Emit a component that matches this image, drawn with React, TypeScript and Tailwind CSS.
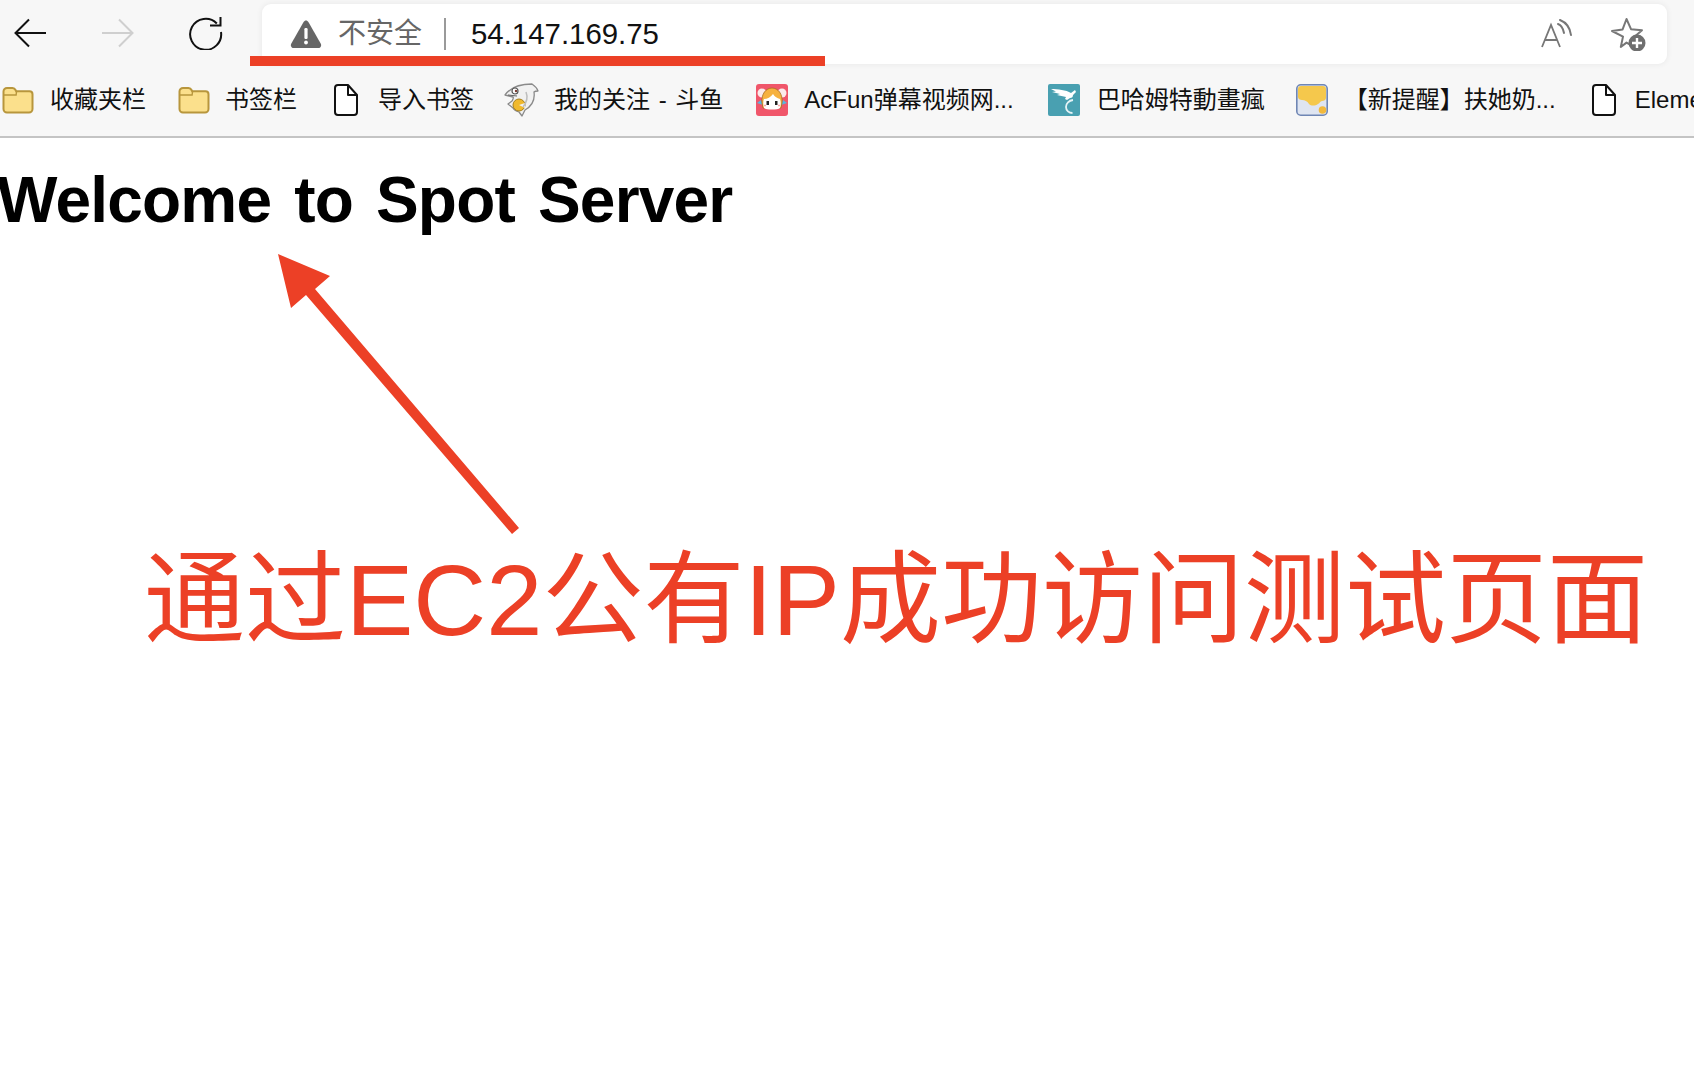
const sans = "font-['Liberation_Sans','Noto_Sans_CJK_SC',sans-serif]";

function FolderIcon() {
    return <svg width="32" height="28" viewBox="0 0 32 28" className="shrink-0">
        <path d="M1.500 5.500a3.500 3.500 0 0 1 3.500-3.500h5.500c1.500 0 2.500.8 3.200 2.200l.5 1h13.300a3 3 0 0 1 3 3V23a3.500 3.500 0 0 1-3.500 3.500H5A3.500 3.500 0 0 1 1.500 23z" fill="#fbe08c" stroke="#b8963c" strokeWidth="2" />
        <path d="M1.500 9h12.600l.5-3.800" fill="none" stroke="#b8963c" strokeWidth="1.400" />
    </svg>;
}

function DocIcon() {
    return <svg width="24" height="32" viewBox="0 0 24 32" className="shrink-0">
        <path d="M4 1h10l9 10v17a3 3 0 0 1-3 3H4a3 3 0 0 1-3-3V4a3 3 0 0 1 3-3z" fill="#fff" stroke="#111" strokeWidth="2" strokeLinejoin="round" />
        <path d="M14 1v10h9" fill="none" stroke="#111" strokeWidth="2" strokeLinejoin="round" />
    </svg>;
}

function SharkIcon() {
    return <svg width="35" height="34" viewBox="0 0 35 34" className="shrink-0">
        <path d="M1 12C6 5 14 1 28 1c3 2 5 4 6 7-2 0-3 0-4 1 1 7-2 14-9 18l-3 6-3-4c-3-1-5-2-6-4L4 21l4-3c1-2 2-3 1-4z" fill="#f1f1f1" stroke="#8a8a8a" strokeWidth="1.300" strokeLinejoin="round" />
        <circle cx="11" cy="8" r="3" fill="#fff" stroke="#555" strokeWidth="1.200" />
        <circle cx="12" cy="8" r="1.200" fill="#7a3b32" />
        <path d="M4 12l9 1" stroke="#666" strokeWidth="1.200" />
        <circle cx="15" cy="22" r="6" fill="#f0b92d" stroke="#a57f1c" />
        <path d="M15 22l6-2v5z" fill="#f1f1f1" />
        <path d="M22 9c2 5 1 10-3 15" fill="none" stroke="#bdbdbd" strokeWidth="1.500" />
    </svg>;
}

function AcfunIcon() {
    return <svg width="32" height="32" viewBox="0 0 32 32" className="shrink-0">
        <rect width="32" height="32" rx="3" fill="#f0566a" />
        <circle cx="6" cy="9" r="4.500" fill="#fbeaea" />
        <circle cx="26" cy="9" r="4.500" fill="#fbeaea" />
        <path d="M1 19l4-3 2 5zM31 19l-4-3-2 5z" fill="#57b6e0" />
        <path d="M6 19C5 10 10 4 16 4s11 6 10 15l-1 5H7z" fill="#f6b13f" stroke="#a76a24" strokeWidth=".8" />
        <path d="M8 24c-1-3-1-7 0-9 3 0 7-2 9-5 2 3 4 4 7 5 1 3 1 6 0 9-2 2-14 2-16 0z" fill="#fff" />
        <rect x="10.500" y="17" width="2.500" height="4" fill="#222" />
        <rect x="19" y="17" width="2.500" height="4" fill="#222" />
        <path d="M8 21.500h2M22 21.500h2" stroke="#f5a6a6" strokeWidth="1.400" />
    </svg>;
}

function BahamutIcon() {
    return <svg width="32" height="32" viewBox="0 0 32 32" className="shrink-0">
        <rect width="32" height="32" rx="2" fill="#49a0b1" />
        <path d="M3 5c7 0 15 1 20 4l4-3 1 2-3 3c0 2-1 3-3 3l-3 2-2-1 1-2-9-2 3-1-8-2 4-.5z" fill="#fff" />
        <path d="M25 16c-4 .5-7 3.500-7 7s3 6 6.500 6" fill="none" stroke="#e5f3f6" strokeWidth="1.800" />
    </svg>;
}

function BlobIcon() {
    return <svg width="32" height="32" viewBox="0 0 32 32" className="shrink-0">
        <rect x=".8" y=".8" width="30.400" height="30.400" rx="4" fill="#dfe5f1" stroke="#6f86b4" strokeWidth="1.600" />
        <path d="M2 13V5c0-2 1-3 3-3h22c2 0 3 1 3 3v9c0 2-2 3-4 3-2 .5-2 2-4 3-3 2-7 2-9 0-2-3-4-4-7-4-2 0-4-1-4-3z" fill="#f5c84c" />
        <circle cx="26.500" cy="26" r="3.800" fill="#f2b93c" />
    </svg>;
}

const bookmarks = [
    { icon: <FolderIcon />, label: "收藏夹栏", className: "ml-[2px] gap-[16px]" },
    { icon: <FolderIcon />, label: "书签栏", className: "ml-[32px] gap-[15px]" },
    { icon: <DocIcon />, label: "导入书签", className: "ml-[33px] gap-[16px]" },
    { icon: <SharkIcon />, label: "我的关注 - 斗鱼", className: "ml-[31px] gap-[17px]" },
    { icon: <AcfunIcon />, label: "AcFun弹幕视频网...", className: "ml-[33px] gap-[16px]" },
    { icon: <BahamutIcon />, label: "巴哈姆特動畫瘋", className: "ml-[34px] gap-[17px]" },
    { icon: <BlobIcon />, label: "【新提醒】扶她奶...", className: "ml-[31px] gap-[16px]" },
    { icon: <DocIcon />, label: "Element", className: "ml-[32px] gap-[15px]" },
];

function NavBar() {
    return <div className="h-[68px] flex items-start">
        <div className="flex items-center h-[68px] pl-[14px] shrink-0 pb-[2px]">
            <svg width="32" height="30" viewBox="0 0 32 30" fill="none" stroke="#111" strokeWidth="2">
                <path d="M32 15H1.500M15 1.500 1.500 15 15 28.500" />
            </svg>
            <svg width="32" height="30" viewBox="0 0 32 30" fill="none" stroke="#cfcfcf" strokeWidth="2" className="ml-[56px]">
                <path d="M0 15h30.500M17 1.500 30.500 15 17 28.500" />
            </svg>
            <svg width="34" height="34" viewBox="0 0 34 34" fill="none" stroke="#111" strokeWidth="2" className="ml-[55px]">
                <path d="M27.800 7.500A15.500 15.500 0 1 0 32 16" />
                <path d="M21 9.500h10.500V1" strokeLinejoin="miter" />
            </svg>
        </div>
        <div className="ml-[39px] mt-[4px] mr-[27px] h-[60px] flex-1 min-w-0 bg-white rounded-[9px] flex items-center shadow-[0_0_6px_rgba(0,0,0,0.07)]">
            <svg width="32" height="30" viewBox="0 0 32 30" className="ml-[28px] shrink-0">
                <path d="M16 1.500c1 0 1.800.6 2.400 1.600l12.400 21.600c1 1.900-.2 4.300-2.400 4.300H3.600c-2.200 0-3.400-2.400-2.400-4.300L13.600 3.100C14.200 2.100 15 1.500 16 1.500z" fill="#666" />
                <rect x="14.400" y="9" width="3.200" height="11" rx="1.200" fill="#fff" />
                <circle cx="16" cy="23.500" r="1.900" fill="#fff" />
            </svg>
            <span className={`${sans} ml-[16px] text-[28px] leading-none text-[#666]`}>不安全</span>
            <div className="ml-[22px] w-[2px] h-[32px] bg-[#9a9a9a]" />
            <span className={`${sans} ml-[25px] text-[29.4px] leading-none text-[#111]`}>54.147.169.75</span>
            <svg width="32" height="30" viewBox="0 0 32 30" fill="none" stroke="#777" strokeWidth="1.800" className="ml-auto shrink-0">
                <path d="M2 28 11 6l9 22M5 21h12" />
                <path d="M18 5c3 1 5 4 6 9M20 1c5 2 10 7 11 15" strokeWidth="2" strokeLinecap="round" />
            </svg>
            <svg width="36" height="34" viewBox="0 0 36 34" fill="none" className="ml-[39px] mr-[20px] shrink-0">
                <path d="M15.500 2 20 12.200l11 1-8.400 7.300 2.500 10.700-9.600-5.600-5.700 4.400 2.200-10.400L1 14l10.600-1.600z" stroke="#777" strokeWidth="2" strokeLinejoin="round" />
                <circle cx="26" cy="26" r="8.500" fill="#6f6f6f" />
                <path d="M26 21v10M21 26h10" stroke="#fff" strokeWidth="2.400" />
            </svg>
        </div>
    </div>;
}

function BookmarkBar() {
    return <div className="h-[70px] flex items-center pb-[4px] overflow-hidden whitespace-nowrap border-b-2 border-[#c4c4c4]">
        { bookmarks.map((bookmark, i) => <div key={i} className={`flex items-center shrink-0 ${bookmark.className}`}>
            <div className="w-8 flex justify-center">{ bookmark.icon }</div>
            <span className={`${sans} text-[24px] leading-none text-[#111] [word-spacing:2px]`}>{bookmark.label}</span>
        </div>) }
    </div>;
}

export default function App() {
    return <div className="relative h-[1078px] overflow-hidden bg-white">
        <div className="bg-[#f7f7f7]">
            <NavBar />
            <BookmarkBar />
        </div>
        <h1 className="font-['Liberation_Sans',sans-serif] font-bold text-[64px] leading-none text-black mt-[30px] -ml-[3px] whitespace-nowrap tracking-[-0.8px] [word-spacing:6px]">
            Welcome to Spot Server
        </h1>

        {/* Annotations drawn over the screenshot */}
        <div className="absolute left-[250px] top-[56px] w-[575px] h-[10px] bg-[#ec4026]" />
        <svg className="absolute left-0 top-0 pointer-events-none" width="600" height="560">
            <polygon points="278,254 330,276 315,289 519,528 512,534 306,295 291,308" fill="#ec4026" />
        </svg>
        <div className={`${sans} absolute left-[144px] top-[540px] text-[101px] leading-[120px] text-[#ec4026] whitespace-nowrap`}>
            通过EC2公有IP成功访问测试页面
        </div>
    </div>;
}
